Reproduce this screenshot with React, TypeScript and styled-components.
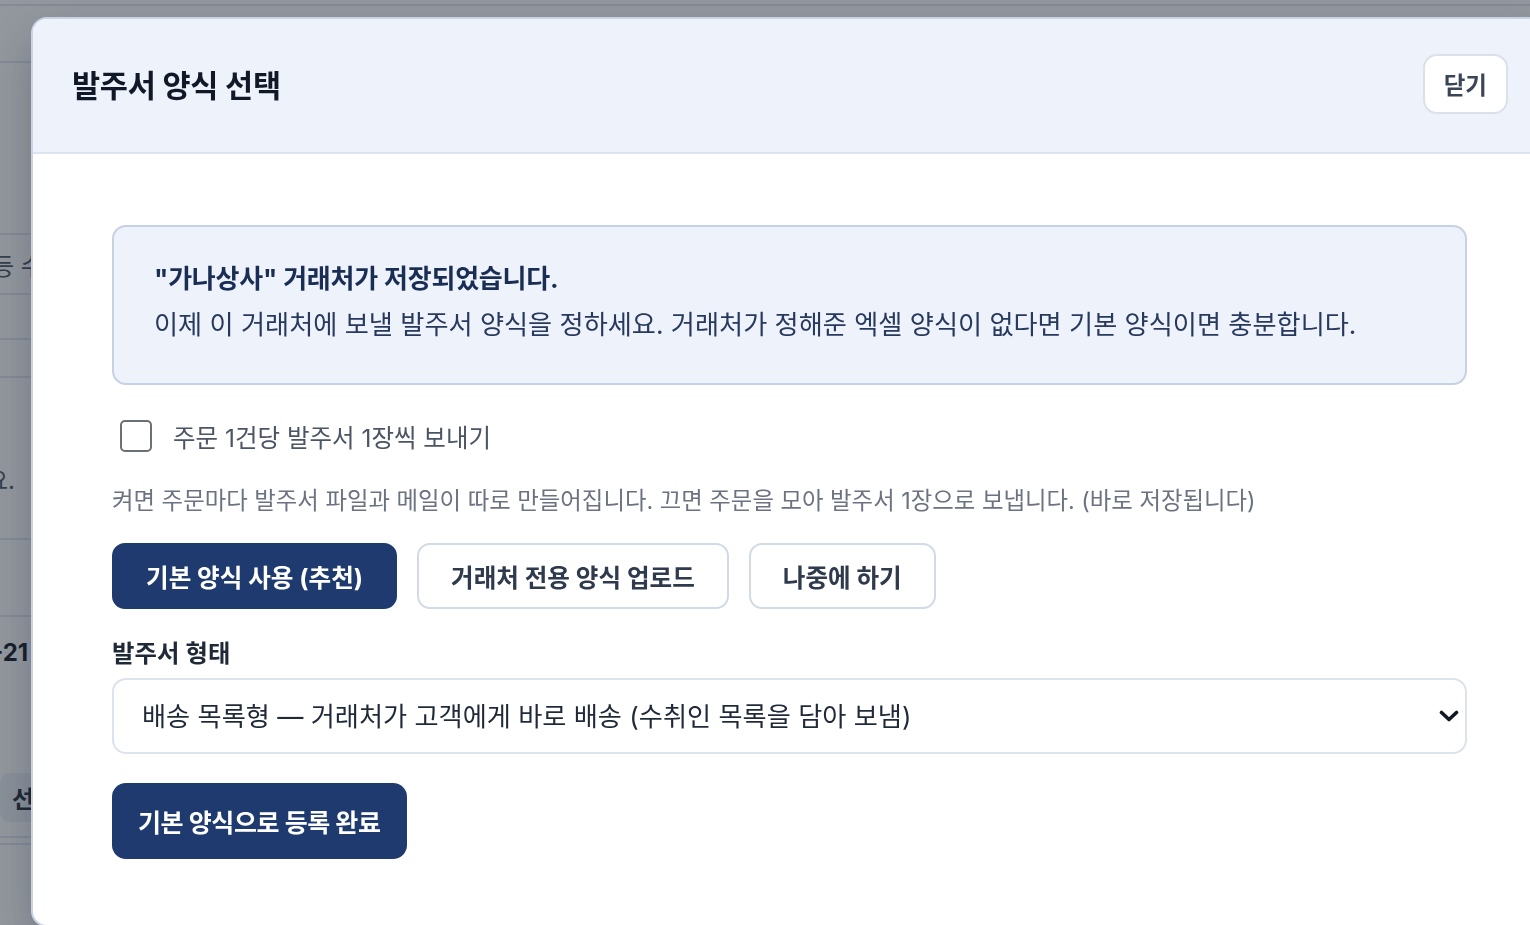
import React, { useState } from 'react'
import styled, { createGlobalStyle } from 'styled-components'

const GlobalStyle = createGlobalStyle`
  * {
    box-sizing: border-box;
  }
  html, body {
    margin: 0;
    padding: 0;
    height: 100%;
    overflow: hidden;
  }
  body {
    font-family: Inter, "Noto Sans CJK KR", sans-serif;
    background: #f4f6fa;
  }
`

type BgRow = {
  height: number
  line?: boolean
  text?: string
  bold?: boolean
  pill?: boolean
  indent?: number
}

// the page behind the dialog, mostly hidden by it
const bgRows: BgRow[] = [
  { height: 6, line: true },
  { height: 57, line: true },
  { height: 172, line: true },
  { height: 60, line: true, text: '등 수', indent: -8 },
  { height: 45, line: true },
  { height: 38, line: true },
  { height: 80 },
  { height: 40, text: '요.', indent: -14 },
  { height: 42, line: true },
  { height: 77, line: true },
  { height: 70, text: '-21', bold: true, indent: -8 },
  { height: 71 },
  { height: 80, line: true, pill: true, text: '선' },
  { height: 7, line: true },
  { height: 120 },
]

const orderTypes = [
  '배송 목록형 — 거래처가 고객에게 바로 배송 (수취인 목록을 담아 보냄)',
  '주문 요약형 — 우리 창고로 입고 (품목별 수량만 담아 보냄)',
]

export default function App() {
  const [perOrder, setPerOrder] = useState(false)
  const [orderType, setOrderType] = useState(orderTypes[0])

  return (
    <>
      <GlobalStyle />
      <Page>
        {bgRows.map((row, i) => (
          <PageRow key={i} $line={row.line} style={{ height: row.height }}>
            {row.text && (
              <PageCell $bold={row.bold} $pill={row.pill} $indent={row.indent ?? 0}>
                {row.text}
              </PageCell>
            )}
          </PageRow>
        ))}
      </Page>
      <Overlay />
      <Modal role="dialog" aria-modal="true">
        <ModalHeader>
          <ModalTitle>발주서 양식 선택</ModalTitle>
          <CloseButton type="button">닫기</CloseButton>
        </ModalHeader>
        <ModalBody>
          <Notice>
            <NoticeTitle>"가나상사" 거래처가 저장되었습니다.</NoticeTitle>
            <NoticeText>
              이제 이 거래처에 보낼 발주서 양식을 정하세요. 거래처가 정해준 엑셀 양식이 없다면 기본 양식이면 충분합니다.
            </NoticeText>
          </Notice>

          <CheckRow>
            <CheckBox
              type="checkbox"
              checked={perOrder}
              onChange={(e) => setPerOrder(e.target.checked)}
            />
            <CheckLabel>주문 1건당 발주서 1장씩 보내기</CheckLabel>
          </CheckRow>
          <HelpText>
            켜면 주문마다 발주서 파일과 메일이 따로 만들어집니다. 끄면 주문을 모아 발주서 1장으로 보냅니다. (바로 저장됩니다)
          </HelpText>

          <ButtonRow>
            <ActionButton type="button" $primary>
              기본 양식 사용 (추천)
            </ActionButton>
            <ActionButton type="button">거래처 전용 양식 업로드</ActionButton>
            <ActionButton type="button">나중에 하기</ActionButton>
          </ButtonRow>

          <FieldLabel htmlFor="order-type">발주서 형태</FieldLabel>
          <SelectWrap>
            <Select
              id="order-type"
              value={orderType}
              onChange={(e) => setOrderType(e.target.value)}
            >
              {orderTypes.map((t) => (
                <option key={t} value={t}>
                  {t}
                </option>
              ))}
            </Select>
            <Chevron width="20" height="12" viewBox="0 0 20 12" aria-hidden="true">
              <path
                d="M2.5 2.5 L10 9.5 L17.5 2.5"
                fill="none"
                stroke="#111827"
                strokeWidth="3.6"
                strokeLinecap="round"
                strokeLinejoin="round"
              />
            </Chevron>
          </SelectWrap>

          <SubmitButton type="button">기본 양식으로 등록 완료</SubmitButton>
        </ModalBody>
      </Modal>
    </>
  )
}

const Page = styled.div`
  display: flex;
  flex-direction: column;
  height: 100vh;
  overflow: hidden;
  background: #ffffff;
`

const PageRow = styled.div<{ $line?: boolean }>`
  display: flex;
  align-items: center;
  flex-shrink: 0;
  border-bottom: ${(p) => (p.$line ? '2px solid #e2e6ee' : 'none')};
`

const PageCell = styled.span<{ $bold?: boolean; $pill?: boolean; $indent: number }>`
  margin-left: ${(p) => p.$indent}px;
  font-size: 24px;
  font-weight: ${(p) => (p.$bold ? 700 : 400)};
  color: ${(p) => (p.$bold || p.$pill ? '#111827' : '#4b5563')};
  white-space: nowrap;
  ${(p) =>
    p.$pill &&
    `
    padding: 7px 24px 7px 12px;
    margin-left: 0;
    border-radius: 10px;
    background: #eef1f6;
    font-weight: 700;
    color: #1f2937;
  `}
`

const Overlay = styled.div`
  position: fixed;
  inset: 0;
  background: rgba(31, 41, 55, 0.48);
`

const Modal = styled.div`
  position: fixed;
  top: 17px;
  left: 31px;
  width: 1520px;
  height: 910px;
  display: flex;
  flex-direction: column;
  background: #ffffff;
  border: 2px solid #c9d3e5;
  border-radius: 16px;
  overflow: hidden;
  box-shadow: 0 20px 50px rgba(15, 23, 42, 0.25);
`

const ModalHeader = styled.div`
  display: flex;
  align-items: center;
  justify-content: space-between;
  height: 135px;
  flex-shrink: 0;
  padding: 0 41px 0 39px;
  background: #eef2fa;
  border-bottom: 2px solid #dce3ee;
`

const ModalTitle = styled.h2`
  margin: 0 0 4px;
  font-size: 30.6px;
  font-weight: 700;
  color: #111827;
  letter-spacing: -0.3px;
`

const CloseButton = styled.button`
  height: 60px;
  margin-bottom: 3px;
  padding: 0 19px;
  background: #ffffff;
  border: 2px solid #dbe1ea;
  border-radius: 14px;
  font-family: inherit;
  font-size: 23.5px;
  font-weight: 700;
  color: #3b4556;
  cursor: pointer;
`

const ModalBody = styled.div`
  display: flex;
  flex-direction: column;
  align-items: flex-start;
  padding: 71px 79px 0 79px;
  width: 1514px;
`

const Notice = styled.div`
  width: 1355px;
  padding: 29px 40px 35px;
  background: #eef2fa;
  border: 2px solid #c6d1e4;
  border-radius: 14px;
`

const NoticeTitle = styled.p`
  margin: 0;
  font-size: 26px;
  line-height: 46px;
  font-weight: 700;
  color: #1a2e55;
  letter-spacing: -0.2px;
`

const NoticeText = styled.p`
  margin: 0;
  font-size: 26.2px;
  line-height: 46px;
  color: #27395d;
`

const CheckRow = styled.label`
  display: flex;
  align-items: center;
  gap: 21px;
  margin-top: 33px;
  height: 36px;
  padding-left: 8px;
  cursor: pointer;
`

const CheckBox = styled.input`
  appearance: none;
  margin: 0;
  width: 32px;
  height: 32px;
  border: 2px solid #6b6f76;
  border-radius: 5px;
  background: #ffffff;
  cursor: pointer;

  &:checked {
    background: #1e3a6e;
    border-color: #1e3a6e;
  }
`

const CheckLabel = styled.span`
  font-size: 24.5px;
  color: #4b5563;
`

const HelpText = styled.p`
  margin: 30px 0 0;
  font-size: 23.4px;
  line-height: 34px;
  color: #6b7280;
`

const ButtonRow = styled.div`
  display: flex;
  gap: 20px;
  margin-top: 25px;
`

const ActionButton = styled.button<{ $primary?: boolean }>`
  height: 66px;
  padding: 0 32px;
  border-radius: 13px;
  border: 2px solid ${(p) => (p.$primary ? '#1e3a6e' : '#d3dae5')};
  background: ${(p) => (p.$primary ? '#1e3a6e' : '#ffffff')};
  color: ${(p) => (p.$primary ? '#ffffff' : '#2f3a4c')};
  font-family: inherit;
  font-size: 24.6px;
  font-weight: 700;
  cursor: pointer;
`

const FieldLabel = styled.label`
  margin-top: 27px;
  font-size: 24.4px;
  line-height: 34px;
  font-weight: 600;
  color: #1f2937;
`

const SelectWrap = styled.div`
  position: relative;
  width: 1355px;
  margin-top: 8px;
`

const Select = styled.select`
  appearance: none;
  display: block;
  width: 100%;
  height: 76px;
  padding: 0 60px 0 28px;
  background: #ffffff;
  border: 2px solid #dde3ec;
  border-radius: 14px;
  font-family: inherit;
  font-size: 26.2px;
  color: #1f2937;
  cursor: pointer;
  outline: none;
`

const Chevron = styled.svg`
  position: absolute;
  right: 8px;
  top: 32px;
  pointer-events: none;
`

const SubmitButton = styled.button`
  margin-top: 29px;
  height: 76px;
  padding: 0 26px;
  border: none;
  border-radius: 14px;
  background: #1e3a6e;
  color: #ffffff;
  font-family: inherit;
  font-size: 25px;
  font-weight: 700;
  letter-spacing: -0.4px;
  cursor: pointer;
`
